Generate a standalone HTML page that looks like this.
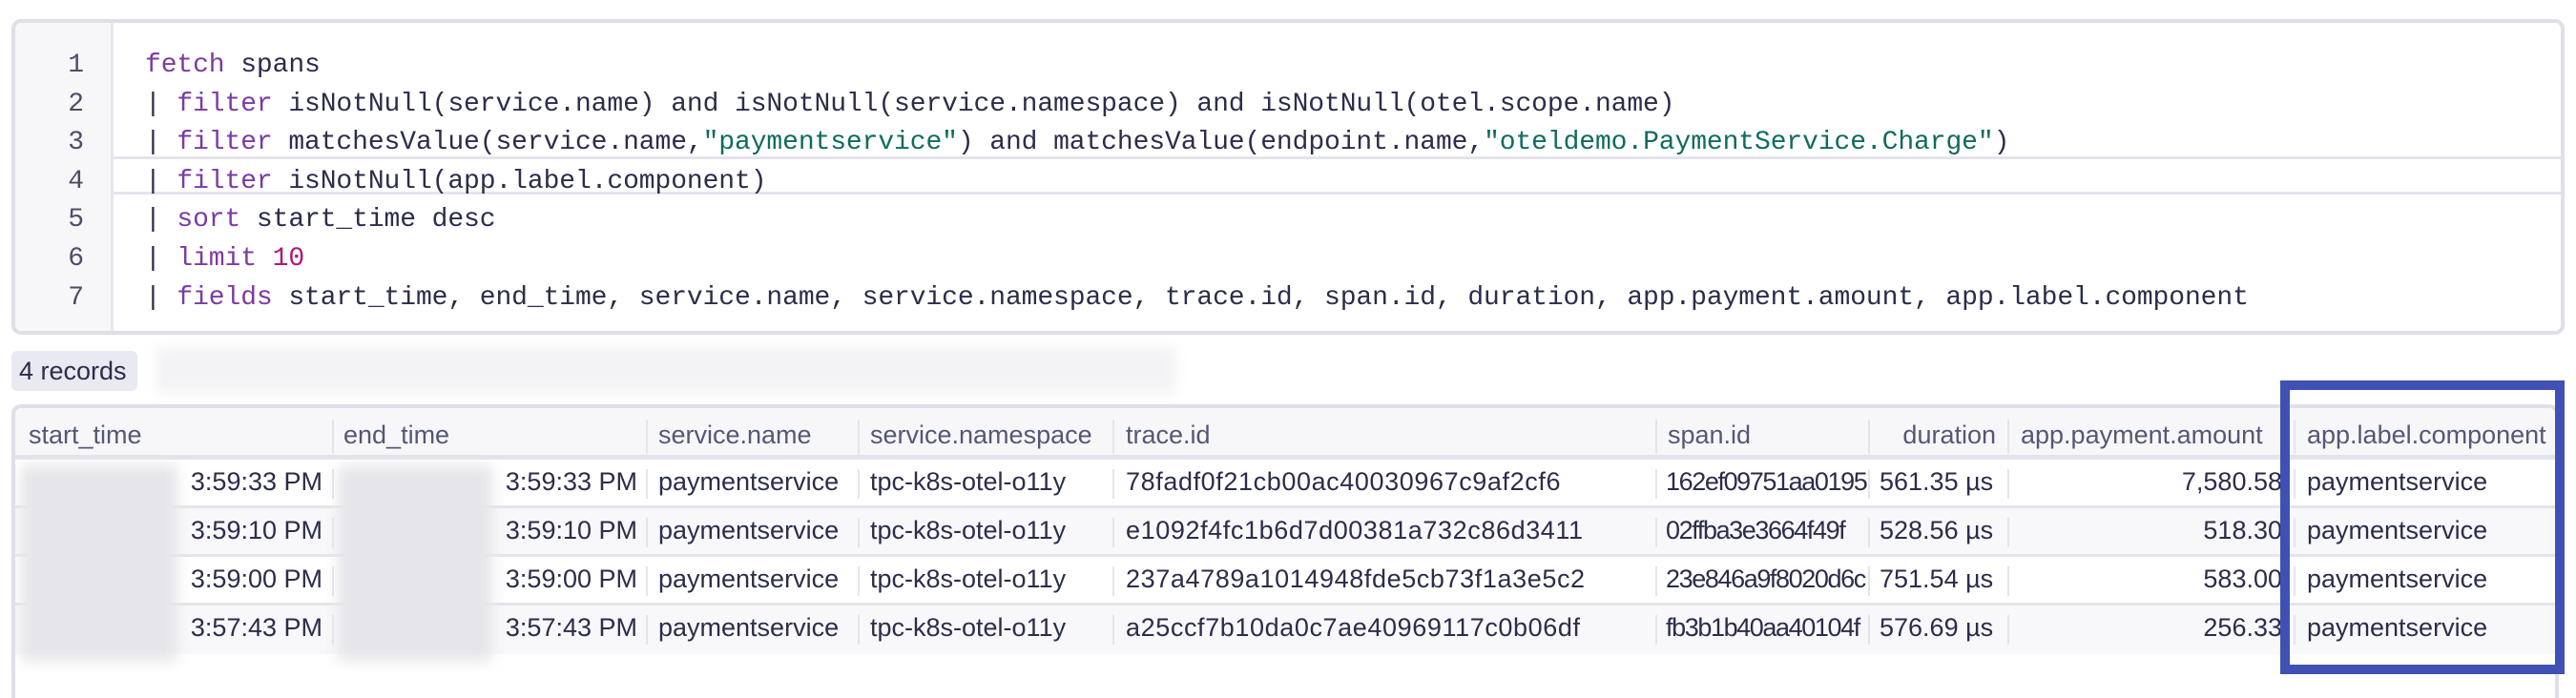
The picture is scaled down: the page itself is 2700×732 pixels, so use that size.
<!DOCTYPE html>
<html style="width:2700px;height:732px;overflow:hidden"><head><meta charset="utf-8"><style>
*{margin:0;padding:0;box-sizing:border-box}
body{width:2700px;height:732px;background:#fff;position:relative;overflow:hidden;font-family:"Liberation Sans",sans-serif;color:#2b2d4a}
.ed{position:absolute;left:12px;top:20px;width:2676px;height:331px;border:4px solid #dedfe8;border-radius:10px;background:#fff;overflow:hidden}
.gut{position:absolute;left:0;top:0;width:103px;height:100%;background:#f7f7f9;border-right:3px solid #e6e6ee}
.ln{position:absolute;left:0;width:72px;text-align:right;font-family:"Liberation Mono",monospace;font-size:28px;color:#4c4e66;}
.cl{position:absolute;left:136px;font-family:"Liberation Mono",monospace;font-size:28px;letter-spacing:-0.1px;white-space:pre;color:#2b2d4a}
.k{color:#7c3aa6}.s{color:#0f6b5e}.n{color:#b0167c}
.hl{position:absolute;left:103px;right:0;top:140px;height:40px;border-top:3px solid #e3e4ec;border-bottom:3px solid #e3e4ec}
.badge{position:absolute;left:12px;top:368px;width:132px;height:42px;background:#e9e9f1;border-radius:6px;font-size:27px;line-height:42px;padding-left:8px;color:#2b2d4a}
.blur{position:absolute;left:164px;top:364px;width:1068px;height:48px;background:#f3f3f6;filter:blur(6px)}
.tb{position:absolute;left:12px;top:424px;width:2670px;height:308px;border:4px solid #dedfe8;border-bottom:none;border-radius:10px 10px 0 0;background:#fff;overflow:hidden}
.hd{position:absolute;left:0;top:0;right:0;height:54px;background:#f7f7f9;border-bottom:5px solid #e2e3eb}
.r{position:absolute;left:0;right:0;height:51px;border-bottom:3px solid #e4e5ec}
.c{position:absolute;font-size:27px;white-space:nowrap;line-height:51px}
.h{color:#545775;line-height:56px}
.sep{position:absolute;width:2px;background:#e4e5ec}
.bl{position:absolute;background:#e6e6ea;filter:blur(7px)}
.box{position:absolute;left:2390px;top:399px;width:298px;height:308px;border:10px solid #4150b3}
</style></head><body>
<div class="ed">
<div class="gut"></div>
<div class="hl"></div>
<div class="ln" style="top:29px">1</div><div class="ln" style="top:70px">2</div><div class="ln" style="top:110px">3</div><div class="ln" style="top:151px">4</div><div class="ln" style="top:191px">5</div><div class="ln" style="top:232px">6</div><div class="ln" style="top:273px">7</div>
<div class="cl" style="top:29px"><span class="k">fetch</span> spans</div>
<div class="cl" style="top:70px">| <span class="k">filter</span> isNotNull(service.name) and isNotNull(service.namespace) and isNotNull(otel.scope.name)</div>
<div class="cl" style="top:110px">| <span class="k">filter</span> matchesValue(service.name,<span class="s">"paymentservice"</span>) and matchesValue(endpoint.name,<span class="s">"oteldemo.PaymentService.Charge"</span>)</div>
<div class="cl" style="top:151px">| <span class="k">filter</span> isNotNull(app.label.component)</div>
<div class="cl" style="top:191px">| <span class="k">sort</span> start_time desc</div>
<div class="cl" style="top:232px">| <span class="k">limit</span> <span class="n">10</span></div>
<div class="cl" style="top:273px">| <span class="k">fields</span> start_time, end_time, service.name, service.namespace, trace.id, span.id, duration, app.payment.amount, app.label.component</div>
</div>
<div class="badge">4 records</div>
<div class="blur"></div>
<div class="tb">
<div class="hd"></div>
<div class="r" style="top:54px;background:#fff"></div>
<div class="r" style="top:105px;background:#f8f8fa"></div>
<div class="r" style="top:156px;background:#fff"></div>
<div class="r" style="top:207px;background:#f8f8fa;border-bottom:none"></div>
<div class="c h" style="left:14px">start_time</div>
<div class="c h" style="left:344px">end_time</div>
<div class="c h" style="left:674px">service.name</div>
<div class="c h" style="left:896px">service.namespace</div>
<div class="c h" style="left:1164px">trace.id</div>
<div class="c h" style="left:1732px">span.id</div>
<div class="c h" style="left:1944px;width:132px;text-align:right">duration</div>
<div class="c h" style="left:2102px">app.payment.amount</div>
<div class="c h" style="left:2402px">app.label.component</div>
<div class="sep" style="left:332px;top:12px;height:36px"></div><div class="sep" style="left:661px;top:12px;height:36px"></div><div class="sep" style="left:883px;top:12px;height:36px"></div><div class="sep" style="left:1150px;top:12px;height:36px"></div><div class="sep" style="left:1719px;top:12px;height:36px"></div><div class="sep" style="left:1942px;top:12px;height:36px"></div><div class="sep" style="left:2088px;top:12px;height:36px"></div><div class="sep" style="left:2388px;top:12px;height:36px"></div>
<div class="bl" style="left:6px;top:60px;width:164px;height:205px"></div>
<div class="bl" style="left:338px;top:60px;width:162px;height:205px"></div>
<div style="position:absolute;left:0;top:0">
<script>
var d=[["3:59:33 PM","78fadf0f21cb00ac40030967c9af2cf6","162ef09751aa0195","561.35 µs","7,580.58"],["3:59:10 PM","e1092f4fc1b6d7d00381a732c86d3411","02ffba3e3664f49f","528.56 µs","518.30"],["3:59:00 PM","237a4789a1014948fde5cb73f1a3e5c2","23e846a9f8020d6c","751.54 µs","583.00"],["3:57:43 PM","a25ccf7b10da0c7ae40969117c0b06df","fb3b1b40aa40104f","576.69 µs","256.33"]];
var h="";var seps=[332,661,883,1150,1719,1942,2088,2388];
d.forEach(function(r,i){var t=52+i*51;
h+='<div class="c" style="top:'+t+'px;left:0;width:322px;text-align:right">'+r[0]+'</div>';
h+='<div class="c" style="top:'+t+'px;left:334px;width:318px;text-align:right">'+r[0]+'</div>';
h+='<div class="c" style="top:'+t+'px;left:674px">paymentservice</div>';
h+='<div class="c" style="top:'+t+'px;left:896px">tpc-k8s-otel-o11y</div>';
h+='<div class="c" style="top:'+t+'px;left:1164px;letter-spacing:0.6px">'+r[1]+'</div>';
h+='<div class="c" style="top:'+t+'px;left:1730px;letter-spacing:-1.4px">'+r[2]+'</div>';
h+='<div class="c" style="top:'+t+'px;left:1954px">'+r[3]+'</div>';
h+='<div class="c" style="top:'+t+'px;left:2088px;width:288px;text-align:right">'+r[4]+'</div>';
h+='<div class="c" style="top:'+t+'px;left:2402px">paymentservice</div>';
seps.forEach(function(s){h+='<div class="sep" style="left:'+s+'px;top:'+(t+12)+'px;height:31px"></div>'});});
document.write(h);
</script>
</div>
</div>
<div class="box"></div>
</body></html>
